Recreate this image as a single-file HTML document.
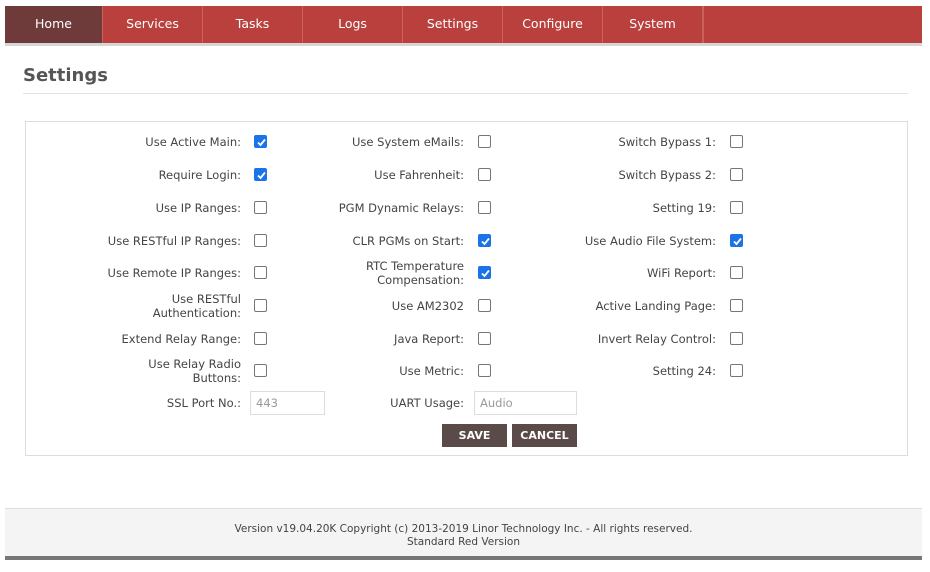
<!DOCTYPE html>
<html><head><style>
*{box-sizing:border-box;margin:0;padding:0}
body{width:930px;height:572px;background:#fff;font-family:"DejaVu Sans",Verdana,sans-serif;color:#444;position:relative;overflow:hidden}
.nav{position:absolute;left:5px;top:6px;width:917px;height:37px;background:#b9403c;box-shadow:0 3px 0 #d6d6d6}
.nav div{position:absolute;top:0;height:37px;width:100px;border-right:1px solid #c9615d;color:#fff;font-size:12.5px;line-height:35px;text-align:center}
h1{position:absolute;left:23px;top:65px;font-size:18px;font-weight:bold;color:#555}
.hr{position:absolute;left:23px;top:93px;width:885px;height:1px;background:#e3e3e3}
.box{position:absolute;left:25px;top:121px;width:883px;height:335px;border:1px solid #ddd}
.l{position:absolute;font-size:11.5px;text-align:right;line-height:14px;width:200px}
.cb{position:absolute;width:13px;height:13px;border:1px solid #767676;border-radius:2px;background:#fff}
.cb.on{background:#1a73e8;border-color:#1a73e8}
.cb.on svg{position:absolute;left:1px;top:1px}
.in{position:absolute;height:24px;border:1px solid #ddd;font-size:11.5px;color:#999;padding:4px 5px}
.btn{position:absolute;top:424px;height:23px;background:#5a4a48;color:#fff;font-weight:bold;font-size:11px;line-height:23px;text-align:center}
.foot{position:absolute;left:5px;top:508px;width:917px;height:52px;background:#f4f4f4;border-top:1px solid #ddd;border-bottom:4px solid #777;font-size:10.5px;text-align:center;padding-top:14px;line-height:13px;color:#444}
</style></head><body>
<div class="nav">
<div style="left:0;width:98px;background:#6e3a3a">Home</div>
<div style="left:98px">Services</div>
<div style="left:198px">Tasks</div>
<div style="left:298px">Logs</div>
<div style="left:398px">Settings</div>
<div style="left:498px">Configure</div>
<div style="left:598px">System</div>
<div style="left:698px;width:1px"></div>
</div>
<h1>Settings</h1>
<div class="hr"></div>
<div class="box"></div>
<div id="f"></div>
<div class="l" style="left:41px;top:396px">SSL Port No.:</div>
<div class="in" style="left:250px;top:391px;width:75px">443</div>
<div class="l" style="left:264px;top:396px">UART Usage:</div>
<div class="in" style="left:474px;top:391px;width:103px">Audio</div>
<div class="btn" style="left:442px;width:65px">SAVE</div>
<div class="btn" style="left:512px;width:65px">CANCEL</div>
<div class="foot">Version v19.04.20K Copyright (c) 2013-2019 Linor Technology Inc. - All rights reserved.<br>Standard Red Version</div>
<script>
var ys=[141,174,207,240,272,305,338,370];
var cols=[[241,254,[["Use Active Main:",1],["Require Login:",1],["Use IP Ranges:",0],["Use RESTful IP Ranges:",0],["Use Remote IP Ranges:",0],["Use RESTful<br>Authentication:",0],["Extend Relay Range:",0],["Use Relay Radio<br>Buttons:",0]]],
[464,478,[["Use System eMails:",0],["Use Fahrenheit:",0],["PGM Dynamic Relays:",0],["CLR PGMs on Start:",1],["RTC Temperature<br>Compensation:",1],["Use AM2302",0],["Java Report:",0],["Use Metric:",0]]],
[716,730,[["Switch Bypass 1:",0],["Switch Bypass 2:",0],["Setting 19:",0],["Use Audio File System:",1],["WiFi Report:",0],["Active Landing Page:",0],["Invert Relay Control:",0],["Setting 24:",0]]]];
var h="";
cols.forEach(function(c){c[2].forEach(function(r,i){var y=ys[i];var two=r[0].indexOf("<br>")>=0;
h+='<div class="l" style="left:'+(c[0]-200)+'px;top:'+(y-(two?13:6))+'px">'+r[0]+'</div>';
h+='<div class="cb'+(r[1]?' on':'')+'" style="left:'+c[1]+'px;top:'+(y-6)+'px">'+(r[1]?'<svg width="11" height="11" viewBox="0 0 11 11"><path d="M2 5.5L4.5 8L9 2.5" stroke="#fff" stroke-width="1.8" fill="none"/></svg>':'')+'</div>';});});
document.getElementById("f").outerHTML=h;
</script>
</body></html>
